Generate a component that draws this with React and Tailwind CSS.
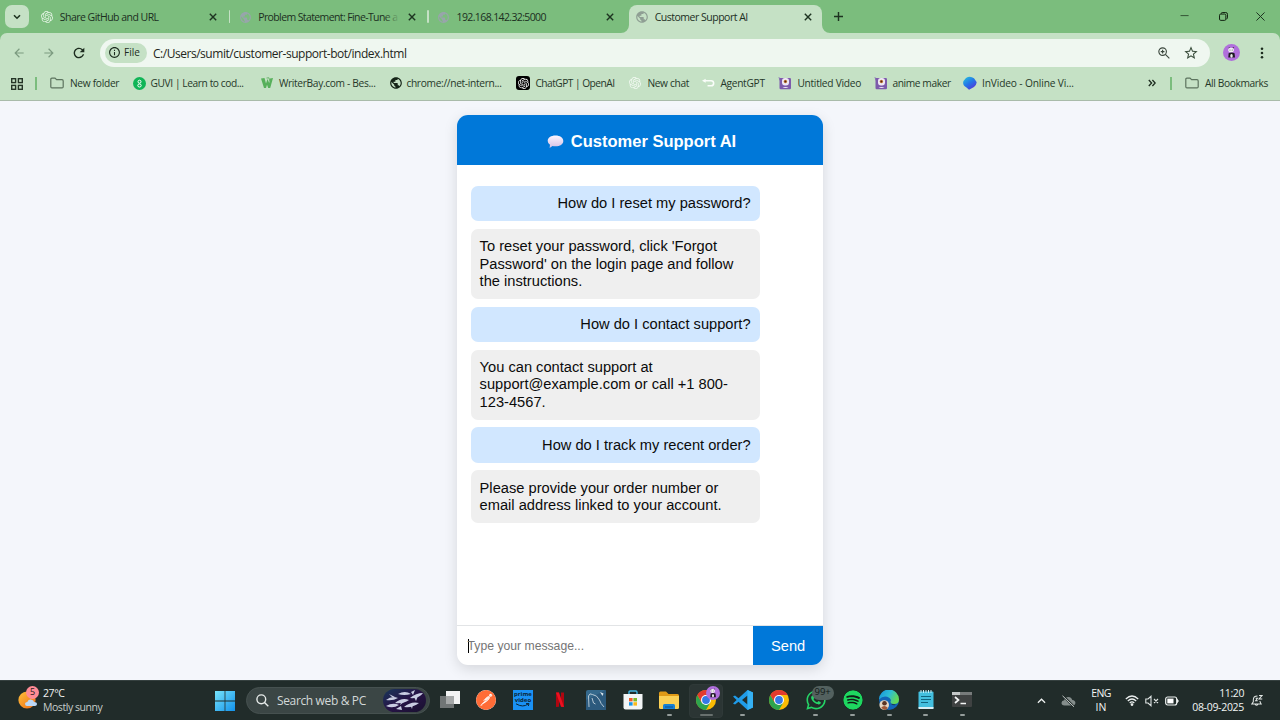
import React from "react";
import { SiOpenai, SiPostman } from "react-icons/si";
import { FaSpotify, FaWhatsapp } from "react-icons/fa";
import { MdPublic, MdStarBorder, MdRefresh, MdArrowBack, MdArrowForward, MdInfoOutline } from "react-icons/md";

const X = () => (
  <svg viewBox="0 0 8 8" className="h-[8px] w-[8px]" stroke="#1d3320" strokeWidth="1.4" fill="none">
    <path d="M0.8 0.8 7.2 7.2M7.2 0.8 0.8 7.2" />
  </svg>
);

const Flare = ({ left }) => (
  <svg viewBox="0 0 8 8" className={left ? "absolute -left-[8px] bottom-0 h-2 w-2" : "absolute -right-[8px] bottom-0 h-2 w-2"} fill="#c5e1c5">
    <path d={left ? "M8 0V8H0A8 8 0 0 0 8 0Z" : "M0 0V8H8A8 8 0 0 1 0 0Z"} />
  </svg>
);

const tabs = [
  { title: "Share GitHub and URL", icon: <SiOpenai className="text-[#e6f5e6]" size={12} />, cls: "tracking-[-0.53px]" },
  { title: "Problem Statement: Fine-Tune a", icon: <MdPublic className="text-[#98a5ab]" size={13} />, cls: "tracking-[-0.61px]", fade: true },
  { title: "192.168.142.32:5000", icon: <MdPublic className="text-[#98a5ab]" size={13} />, cls: "tracking-[-0.62px]" },
  { title: "Customer Support AI", icon: <MdPublic className="text-[#8f9f94]" size={14} />, cls: "tracking-[-0.49px]", active: true },
];

function TabStrip() {
  return (
    <div className="flex h-[33px] bg-[#7bbd7d]">
      <div className="flex w-[32px] pl-[5px] pt-[5px]">
        <div className="flex h-[23px] w-[24px] items-center justify-center rounded-[7px] bg-[#c5e1c5]">
          <svg viewBox="0 0 8 6" className="w-[8px]" stroke="#1d3320" strokeWidth="1.6" fill="none"><path d="M1 1.2 4 4.2 7 1.2" /></svg>
        </div>
      </div>
      {tabs.map((t, i) => (
        <div key={t.title} className="flex w-[198.4px] shrink-0 pt-[5px]">
          <div className={t.active ? "relative ml-[1.5px] flex h-[28px] w-[193px] items-center rounded-t-[8px] bg-[#c5e1c5] pl-[6.5px]" : "flex h-[24px] w-[197px] items-center pl-[8.5px]"}>
            {t.active && <Flare left />}
            {t.active && <Flare />}
            <span className={t.active ? "mb-[4px] flex w-[19.5px] items-center" : "flex w-[19.3px] items-center"}>{t.icon}</span>
            <span className={t.active ? "mb-[4px] w-[149.5px]" : "relative w-[149.5px]"}>
              <span className={"block whitespace-nowrap text-[10.5px] leading-[16px] text-[#1c2f1f] " + t.cls}>{t.title}</span>
              {t.fade && <span className="absolute left-[126px] top-0 h-4 w-[16px] bg-gradient-to-r from-[#7bbd7d]/0 to-[#7bbd7d]" />}
            </span>
            <span className={t.active ? "mb-[4px]" : ""}><X /></span>
          </div>
          {i < 2 && <div className="mt-[5px] h-[13px] w-[1.6px] shrink-0 rounded bg-[#c5e1c5]" />}
        </div>
      ))}
      <div className="flex w-[26px] items-start justify-center pt-[12px]">
        <svg viewBox="0 0 10 10" className="h-[9px] w-[9px]" stroke="#1d3320" strokeWidth="1.6"><path d="M5 0V10M0 5H10" /></svg>
      </div>
      <div className="ml-auto flex items-start gap-[28.5px] pr-[15px] pt-[12px]">
        <svg viewBox="0 0 10 10" className="h-[9px] w-[10px]" stroke="#2c4a2e" strokeWidth="1"><path d="M0 4H9" /></svg>
        <svg viewBox="0 0 10 10" className="h-[9px] w-[9px]" stroke="#10200f" strokeWidth="1.1" fill="none"><rect x="0.6" y="2.3" width="7" height="7" rx="1.3" /><path d="M2.6 2V1.6Q2.6 .6 3.6 .6H7.5Q9.4 .6 9.4 2.5V6.5Q9.4 7.5 8.3 7.6" /></svg>
        <svg viewBox="0 0 10 10" className="h-[9px] w-[9px]" stroke="#1d3320" strokeWidth="1.1"><path d="M.5 .5 9.5 9.5M9.5 .5 .5 9.5" /></svg>
      </div>
    </div>
  );
}

function Avatar({ className }) {
  return (
    <svg viewBox="0 0 16 16" className={className}>
      <circle cx="8" cy="8" r="8" fill="#b06fdc" />
      <circle cx="5.9" cy="3.8" r=".7" fill="#444" /><circle cx="9.8" cy="3.5" r=".7" fill="#444" />
      <ellipse cx="7.6" cy="5.7" rx="2.7" ry="2.2" fill="#f2eef6" />
      <circle cx="6.6" cy="5.7" r=".5" fill="#555" /><circle cx="8.7" cy="5.7" r=".5" fill="#555" />
      <path d="M5.3 8.6Q8 7.4 10.9 8.6L11.3 12.8H5Z" fill="#1d1a22" />
      <ellipse cx="8" cy="11.2" rx="1.2" ry="1.7" fill="#eee" />
    </svg>
  );
}

function Toolbar() {
  return (
    <div className="flex h-[39px] items-center text-[#3a4d3c]">
      <div className="flex w-[100px] shrink-0 items-center pl-[12px]">
        <MdArrowBack size={14} className="text-[#7c9b80]" />
        <MdArrowForward size={14} className="ml-[15.5px] text-[#7c9b80]" />
        <MdRefresh size={16} className="ml-[15px] text-[#1c2b1e]" />
      </div>
      <div className="flex h-[28px] w-[1110px] shrink-0 items-center rounded-full bg-[#eff7f0] pl-[5px] pr-[11.5px]">
        <div className="flex h-[20px] w-[42px] items-center rounded-full bg-[#c5e1c5] pl-[3px] text-[#1c2b1e]">
          <MdInfoOutline size={13} />
          <span className="ml-[3px] text-[10px] font-medium">File</span>
        </div>
        <span className="ml-[6px] mt-[2px] text-[12px] tracking-[-0.47px] text-[#1f2620]">C:/Users/sumit/customer-support-bot/index.html</span>
        <svg viewBox="0 0 13 13" className="ml-auto h-[12px] w-[12px]" fill="none" stroke="#3a463c" strokeWidth="1.2"><circle cx="5" cy="5" r="4.1" /><path d="M8 8 12.3 12.3M5 3V7M3 5H7" /></svg>
        <MdStarBorder size={16} className="ml-[13px]" />
      </div>
      <Avatar className="ml-[13px] h-[17px] w-[17px] shrink-0" />
      <svg viewBox="0 0 4 14" className="ml-[20px] h-[12px] w-[4px] shrink-0" fill="#1c2b1e"><circle cx="2" cy="2" r="1.5" /><circle cx="2" cy="7" r="1.5" /><circle cx="2" cy="12" r="1.5" /></svg>
    </div>
  );
}

const Guvi = () => (
  <svg viewBox="0 0 13 13" className="h-[13px] w-[13px]"><circle cx="6.5" cy="6.5" r="6.5" fill="#10b557" /><circle cx="6.5" cy="4.7" r="1.5" fill="none" stroke="#fff" strokeWidth="1" /><ellipse cx="6.5" cy="8.5" rx="1.7" ry="1.5" fill="none" stroke="#fff" strokeWidth="1" /></svg>
);
const Writer = () => (
  <svg viewBox="0 0 12 12" className="h-[12px] w-[12px]"><path d="M0 1.5 3.5 1 5 6.5 6.5 2 8.2 6 9 1.5 12 1 9.2 11H7.2L6 7.8 5 11H3Z" fill="#57b05b" /><path d="M5.5 1 8 .8 8.8 4" stroke="#6cb56e" fill="none" /></svg>
);
const ChatGpt = () => (
  <span className="flex h-[14px] w-[14px] items-center justify-center rounded-[3px] bg-black"><SiOpenai size={11} className="text-white" /></span>
);
const Agent = () => (
  <svg viewBox="0 0 14 12" className="h-[12px] w-[13px]" fill="none" stroke="#fafdfa" strokeWidth="1.7"><path d="M3 3.5H9.8A2.7 2.7 0 0 1 9.8 9H6" /><path d="M0 3.5 4 1.3V5.7Z" fill="#fafdfa" stroke="none" /></svg>
);
const Robot = () => (
  <svg viewBox="0 0 14 14" className="h-[14px] w-[14px]"><path d="M.3 1 3.5 2.5 2 5Z" fill="#8c78b8" /><rect x="1.5" y="2" width="11.5" height="11.2" rx="1.2" fill="#7d5bab" /><rect x="4" y="2" width="7" height="7.5" rx="3" fill="#efe8f5" /><circle cx="7.4" cy="5.5" r="1.7" fill="#d08a3a" /><circle cx="7.4" cy="5.5" r="1" fill="#5a2015" /><path d="M4.5 12Q7.5 10 10.5 12Z" fill="#eee7f5" /></svg>
);
const InVideo = () => (
  <svg viewBox="0 0 14 14" className="h-[14px] w-[14px]"><defs><linearGradient id="inv" x1="0" y1="0" x2="0.7" y2="1"><stop offset="0" stopColor="#25c8dc" /><stop offset=".55" stopColor="#2474e8" /><stop offset="1" stopColor="#5435d8" /></linearGradient></defs><path d="M3 2Q7-.8 11 2.2L13.6 6Q14 8 11 11L6 13.8 3.5 11.5Q-1 9 .5 5Z" fill="url(#inv)" /></svg>
);
const Folder = () => <svg viewBox="0 0 14 12" className="h-[12px] w-[14px]" fill="none" stroke="#5c735e" strokeWidth="1.2"><path d="M.8 2.2Q.8 1.1 1.9 1.1H5L6.6 2.7H12Q13.2 2.7 13.2 3.9V9.7Q13.2 10.8 12.1 10.8H1.9Q.8 10.8 .8 9.7Z" /></svg>;

const marks = [
  ["New folder", <Folder />, "w-[82.6px]", "w-[20px]", "tracking-[-0.3px]"],
  ["GUVI | Learn to cod...", <Guvi />, "w-[128.3px]", "w-[18px]", "tracking-[-0.41px]"],
  ["WriterBay.com - Bes...", <Writer />, "w-[128px]", "w-[18px]", "tracking-[-0.33px]"],
  ["chrome://net-intern...", <MdPublic size={14} className="text-[#152417]" />, "w-[127.5px]", "w-[17.5px]", "tracking-[-0.32px]"],
  ["ChatGPT | OpenAI", <ChatGpt />, "w-[113px]", "w-[19px]", "tracking-[-0.52px]"],
  ["New chat", <SiOpenai size={12} className="text-[#f3faf3]" />, "w-[73px]", "w-[18px]", "tracking-[-0.33px]"],
  ["AgentGPT", <Agent />, "w-[76px]", "w-[18px]", "tracking-[-0.3px]"],
  ["Untitled Video", <Robot />, "w-[96px]", "w-[19px]", "tracking-[-0.27px]"],
  ["anime maker", <Robot />, "w-[88.7px]", "w-[18px]", "tracking-[-0.38px]"],
  ["InVideo - Online Vi...", <InVideo />, "w-[150px]", "w-[19px]", "tracking-[-0.15px]"],
];

function Bookmarks() {
  return (
    <div className="flex h-[23px] items-center text-[10.2px] text-[#263829]">
      <svg viewBox="0 0 12 12" className="ml-[10.5px] h-[12px] w-[12px] shrink-0" fill="none" stroke="#253527" strokeWidth="1.4"><rect x=".7" y=".7" width="3.9" height="3.9" /><rect x="7.4" y=".7" width="3.9" height="3.9" /><rect x=".7" y="7.4" width="3.9" height="3.9" /><rect x="7.4" y="7.4" width="3.9" height="3.9" /></svg>
      <div className="ml-[12.5px] mr-[13.3px] h-[13px] w-[1.7px] shrink-0 bg-[#7bbd7d]" />
      {marks.map(([t, icon, w, iw, tr]) => (
        <div key={t} className={"flex shrink-0 items-center whitespace-nowrap " + w}>
          <span className={"flex shrink-0 items-center " + iw}>{icon}</span>
          <span className={tr}>{t}</span>
        </div>
      ))}
      <div className="ml-auto flex items-center">
        <svg viewBox="0 0 8 8" className="h-[8px] w-[8px]" fill="none" stroke="#1c2b1e" strokeWidth="1.3"><path d="M.8 1 3.6 4 .8 7M4.4 1 7.2 4 4.4 7" /></svg>
        <div className="ml-[14px] mr-[13px] h-[13px] w-[1.7px] bg-[#7bbd7d]" />
        <Folder />
        <span className="ml-[6px] w-[75px] whitespace-nowrap tracking-[-0.38px]">All Bookmarks</span>
      </div>
    </div>
  );
}

const messages = [
  ["user", "How do I reset my password?"],
  ["bot", "To reset your password, click 'Forgot Password' on the login page and follow the instructions."],
  ["user", "How do I contact support?"],
  ["bot", "You can contact support at support@example.com or call +1 800-123-4567."],
  ["user", "How do I track my recent order?"],
  ["bot", "Please provide your order number or email address linked to your account."],
];

function Chat() {
  return (
    <div className="flex h-[550px] w-[366.8px] flex-col overflow-hidden rounded-[11px] bg-white font-['Liberation_Sans',Arial,sans-serif] shadow-[0_4px_14px_rgba(0,0,0,0.13)]">
      <div className="flex h-[49.7px] items-center justify-center bg-[#0078d9] pl-[3px] pt-[3px] text-[16.5px] font-bold text-white">
        <svg viewBox="0 0 17 14" className="mr-[7px] h-[14px] w-[17px]"><defs><linearGradient id="bub" x1="0" y1="0" x2="0" y2="1"><stop offset="0" stopColor="#fbf5ff" /><stop offset="1" stopColor="#d3bfe4" /></linearGradient></defs><path d="M8.5 .6C13 .6 16.3 2.7 16.3 6S13 11.3 8.5 11.3Q6.8 11.3 5.5 10.9L2.6 13 3 9.8Q.7 8.3 .7 6C.7 2.7 4 .6 8.5 .6Z" fill="url(#bub)" /></svg>
        Customer Support AI
      </div>
      <div className="flex flex-1 flex-col gap-[7.9px] px-[14px] pt-[21.1px]">
        {messages.map(([who, text]) => (
          <div key={text} className={"w-[289px] rounded-[7px] px-[9px] pb-[8.3px] pt-[9.3px] text-[14.67px] leading-[17.42px] text-[#0b0b0b] " + (who === "user" ? "bg-[#d1e7ff] text-right" : "bg-[#efefef]")}>{text}</div>
        ))}
      </div>
      <div className="flex h-[40px] border-t border-[#e2e4e6]">
        <div className="flex flex-1 items-center pl-[11px] text-[12.2px] text-[#757575]">
          <span className="-mr-px h-[14px] w-px bg-black" />
          <span>Type your message...</span>
        </div>
        <div className="flex w-[70.6px] items-center justify-center bg-[#0078d9] text-[14.67px] text-white">Send</div>
      </div>
    </div>
  );
}

const S = ({ children, box = "0 0 20 20", c = "h-[20px] w-[20px]" }) => <svg viewBox={box} className={c}>{children}</svg>;

const Chrome = () => (
  <S>
    <circle cx="10" cy="10" r="10" fill="#fbbc04" />
    <path d="M1.34 5A10 10 0 0 0 10 20L14.33 12.5 10 10 5.67 12.5Z" fill="#2da44e" />
    <path d="M1.34 5A10 10 0 0 1 18.66 5H10L5.67 12.5Z" fill="#e33b2e" />
    <circle cx="10" cy="10" r="5" fill="#fff" /><circle cx="10" cy="10" r="3.9" fill="#3479e6" />
  </S>
);
const Prime = () => (
  <span className="flex h-[20px] w-[20px] flex-col items-center bg-[#1a91f4] pt-[2px] text-[6px] font-bold leading-[5.5px] text-[#0c2536]">
    <span>prime</span><span>video</span>
    <svg viewBox="0 0 14 4" className="h-[4px] w-[14px]" fill="none" stroke="#0c2536"><path d="M0 .8Q7 5 12 1M10 .6H13L12.3 3" /></svg>
  </span>
);
const apps = [
  ["task view", <S><rect x="6" y="1" width="14" height="13" fill="#f2f3f3" /><rect x="0" y="6" width="14" height="12" fill="#707575" /><rect x="6" y="6" width="8" height="8" fill="#a5a8a8" /></S>],
  ["postman", <SiPostman size={20} className="rounded-full bg-white text-[#ff6c37]" />],
  ["prime", <Prime />],
  ["netflix", <S><path d="M6 2.5H9V16.8L6 17Z" fill="#b00610" /><path d="M11 2.5H14V17L11 16.8Z" fill="#b00610" /><path d="M6 2.5H9L14 17 11 16.8Z" fill="#ec1020" /></S>],
  ["mysql", <S><rect width="20" height="20" rx="2" fill="#35698c" /><path d="M0 10 20 0V20H0Z" fill="#2c5a7d" /><path d="M3 17 2.5 6Q3.5 2.5 6.5 4.5 11 5 13.5 10 14.5 13.5 18 17M6 8 7.5 13 9.5 14" fill="none" stroke="#c3d3dd" strokeWidth=".9" /><path d="M14 2 17.5 3.5 16.5 6Z" fill="#dbe6ec" /></S>],
  ["store", <S><path d="M6 5V2.2Q6 1 7.2 1H12.8Q14 1 14 2.2V5" fill="none" stroke="#43b4e0" strokeWidth="1.4" /><path d="M.5 4H19.5V17.5Q19.5 19.5 17.5 19.5H2.5Q.5 19.5 .5 17.5Z" fill="#f3f5f6" /><path d="M6 8H9.6V11.4H6Z" fill="#f15a29" /><path d="M10.4 8H14V11.4H10.4Z" fill="#7ab929" /><path d="M6 12.2H9.6V15.6H6Z" fill="#1996e8" /><path d="M10.4 12.2H14V15.6H10.4Z" fill="#fbb91a" /></S>],
  ["files", <S><path d="M0 3Q0 1.5 1.5 1.5H7L9.5 4H18.5Q20 4 20 5.5V10H0Z" fill="#e09a17" /><path d="M0 6H20V17.5Q20 19 18.5 19H1.5Q0 19 0 17.5Z" fill="#fbd055" /><path d="M4 19V15.5Q4 14 5.5 14H14.5Q16 14 16 15.5V19Z" fill="#1680d5" /><path d="M6 17H14" stroke="#0b4f92" /></S>, "dot"],
  ["chrome-profile", <Chrome />, "active"],
  ["code", <S><path d="M14.5 0 20 2.5V17.5L14.5 20 5.5 11.7 2 14.5 0 13.4 3.6 10 0 6.6 2 5.5 5.5 8.3ZM14.5 5.5 9 10 14.5 14.5Z" fill="#1f9be8" fillRule="evenodd" /><path d="M14.5 0 20 2.5V17.5L14.5 20Z" fill="#35b1f4" /></S>, "dot"],
  ["chrome", <Chrome />],
  ["whatsapp", <FaWhatsapp size={22} className="text-[#25d366]" />, "badge"],
  ["spotify", <FaSpotify size={20} className="rounded-full bg-[#101c16] text-[#1ed760]" />, "dot"],
  ["edge", <S><defs><linearGradient id="edg" x1="0" y1="0" x2="1" y2=".4"><stop offset="0" stopColor="#1691dc" /><stop offset=".55" stopColor="#2dbdd6" /><stop offset="1" stopColor="#63d957" /></linearGradient></defs><circle cx="10" cy="10" r="10" fill="#1265b8" /><path d="M0 9.5A10 10 0 0 1 20 9.5Q20 14 15 14 11 14 11.5 11.5 12.7 9.8 10.5 8 5 4.5 0 9.5Z" fill="url(#edg)" /><path d="M11.5 11.5Q11 14.5 15.5 14.5 16.5 14.5 17.5 14L15.5 15.3Q11.5 15 11.5 11.5Z" fill="#20292a" /><circle cx="5.2" cy="15" r="4.8" fill="#e6d5c2" /><circle cx="5.5" cy="13.3" r="2.3" fill="#5b3526" /><path d="M2 18Q5 14 9 18L6 20Z" fill="#a05737" /></S>, "dot"],
  ["notepad", <S><rect x="2.5" y="1.5" width="15" height="17" rx="1" fill="#43bfdf" /><path d="M2.5 17H17.5V19H2.5Z" fill="#d8eef4" /><path d="M5 0V3M7.5 0V3M10 0V3M12.5 0V3M15 0V3" stroke="#c8edf6" /><path d="M5 6.5H15M5 9.5H15M5 12.5H12" stroke="#116580" strokeWidth="1.2" /></S>, "dot"],
  ["terminal", <S><rect y="2" width="20" height="15" rx="1" fill="#3f4242" /><path d="M0 2H20V5H0Z" fill="#777b7b" /><path d="M0 2H8V5H0Z" fill="#c4c8c8" /><path d="M3 7 6.5 10 3 13M8.5 13.5H14" fill="none" stroke="#f4f6f6" strokeWidth="1.7" /></S>, "dot"],
];

function Taskbar() {
  return (
    <div className="flex h-[40px] items-center border-t border-[#35403f] bg-[#212c2a] text-[10.5px] text-[#f2f5f4]">
      <div className="flex w-[215px] items-center pl-[18px]">
        <div className="relative h-[24px] w-[21px]">
          <svg viewBox="0 0 21 24" className="h-[24px] w-[21px]"><defs><linearGradient id="sun" x1="0" y1="0" x2="1" y2="1"><stop stopColor="#ffc139" /><stop offset="1" stopColor="#ed6a18" /></linearGradient></defs><circle cx="9" cy="11" r="8.6" fill="url(#sun)" /><path d="M9 17Q7 17 7 14.8 7.2 13.1 9.3 12.9 10.5 10.1 13.5 10.7 15.7 11.1 16 13 19 13.1 19 15.3 18.8 17 17 17Z" fill="#bdd8f6" /></svg>
          <span className="absolute left-[8px] top-[-3px] flex h-[13px] w-[13px] items-center justify-center rounded-full bg-[#ff8b95] text-[9px] text-[#2d1b1d]">5</span>
        </div>
        <div className="ml-[4px] leading-[13.5px]">
          <div className="tracking-[-0.4px]">27°C</div><div className="tracking-[-0.45px] text-[#c6cccb]">Mostly sunny</div>
        </div>
      </div>
      <svg viewBox="0 0 20 20" className="h-[20px] w-[20px]"><defs><linearGradient id="win" x1="0" y1="0" x2="1" y2="1"><stop stopColor="#77e4fb" /><stop offset="1" stopColor="#1291ea" /></linearGradient></defs><path d="M0 0H9.6V9.6H0ZM10.4 0H20V9.6H10.4ZM0 10.4H9.6V20H0ZM10.4 10.4H20V20H10.4Z" fill="url(#win)" /></svg>
      <div className="ml-[11px] flex h-[27px] w-[183.5px] items-center rounded-full border border-[#465150] bg-[#3b4645] pl-[9px]">
        <svg viewBox="0 0 13 13" className="h-[13px] w-[13px]" fill="none" stroke="#e8eceb" strokeWidth="1.4"><circle cx="5.3" cy="5.3" r="4.4" /><path d="M8.5 8.5 12.3 12.3" /></svg>
        <span className="ml-[8px] w-[106px] whitespace-nowrap text-[12px] tracking-[-0.36px] text-[#d3d9d8]">Search web &amp; PC</span>
        <svg viewBox="0 0 43 23" className="h-[23px] w-[43px]"><defs><linearGradient id="fish" x1="0" y1="0" x2="1" y2="1"><stop stopColor="#183659" /><stop offset=".5" stopColor="#271447" /><stop offset="1" stopColor="#18102e" /></linearGradient></defs><rect width="43" height="23" rx="11.5" fill="url(#fish)" /><g fill="#c9cde2"><path d="M3 11Q9 6 15 9Q10 12 3 11ZM15 5Q22 1 28 5Q21 7 15 5ZM12 14Q19 8 26 11Q20 15 12 14ZM27 9Q33 4 40 4Q36 10 27 9ZM3 17Q10 13 16 16Q10 20 3 17ZM21 18Q28 12 36 14Q30 19 21 18Z" /><path d="M9 8 6 5 12 8ZM19 11 17 16 21 13ZM31 8 33 12 35 7ZM27 15 29 20 30 15ZM13 20 18 17 19 21ZM28 3 32 1 30 6Z" /></g></svg>
      </div>
      <div className="ml-[1.9px] flex">
        {apps.map(([name, icon, state]) => (
          <div key={name} className="relative flex h-[40px] w-[36.64px] items-center justify-center">
            {state === "active" && <span className="absolute left-[1px] top-[3px] h-[34px] w-[34px] rounded-[4px] border border-[#2f3938] bg-[#2b3534]" />}
            <span className="relative -top-[0.5px] flex">{icon}</span>
            {state === "active" && <Avatar className="absolute left-[18.5px] top-[5px] h-[14px] w-[14px]" />}
            {state === "badge" && <span className="absolute left-[14px] top-[5px] flex h-[14px] w-[22px] items-center justify-center rounded-full bg-[#53615f] text-[9.5px] text-[#111a18]">99+</span>}
            {state && <span className={"absolute bottom-[4.5px] h-[2.5px] rounded-full " + (state === "active" ? "w-[13px] bg-[#68706e]" : "w-[5px] bg-[#959d9b]")} />}
          </div>
        ))}
      </div>
      <div className="ml-auto flex items-center pr-[17px]">
        <svg viewBox="0 0 10 6" className="h-[6px] w-[9px]" fill="none" stroke="#eef1f0" strokeWidth="1.4"><path d="M1 5 5 1 9 5" /></svg>
        <svg viewBox="0 0 15 12" className="ml-[15px] h-[12px] w-[15px]"><path d="M3.5 10.5Q.5 10.5 .5 7.8.7 5.5 3.2 5.2 4.2 2 7.4 2 10.3 2 11.3 4.9 14.4 5.2 14.4 7.8 14.3 10.5 11.5 10.5Z" fill="#848d8b" /><path d="M2 .8 13 11.8" stroke="#212c2a" strokeWidth="2.2" /><path d="M1.5 .8 13 11.8" stroke="#c5cbc9" /></svg>
        <div className="ml-[13px] w-[24px] whitespace-nowrap text-center leading-[13.5px]"><div className="tracking-[-0.6px]">ENG</div><div>IN</div></div>
        <svg viewBox="0 0 14 11" className="ml-[12px] h-[11px] w-[14px]" fill="none" stroke="#edf1f0" strokeWidth="1.2"><path d="M.8 4Q7-2 13.2 4M2.8 6Q7 2 11.2 6M4.7 8Q7 5.8 9.3 8" /><circle cx="7" cy="9.6" r=".8" fill="#edf1f0" /></svg>
        <svg viewBox="0 0 14 12" className="ml-[6px] h-[12px] w-[14px]" fill="none" stroke="#dfe4e3" strokeWidth="1.1"><path d="M.8 4H3L6 1.3V10.7L3 8H.8ZM9 4 13 8M13 4 9 8" /></svg>
        <svg viewBox="0 0 14 10" className="ml-[6px] h-[10px] w-[14px]"><rect x=".7" y="1" width="11" height="8" rx="2" fill="none" stroke="#edf1f0" strokeWidth="1.2" /><rect x="2.3" y="2.6" width="6.2" height="4.8" fill="#fff" /><path d="M12.5 3.5Q14 5 12.5 6.5Z" fill="#edf1f0" stroke="#edf1f0" /></svg>
        <div className="ml-[12px] w-[53px] whitespace-nowrap text-right leading-[13.5px]"><div className="tracking-[-0.4px]">11:20</div><div className="-ml-2 tracking-[-0.3px]">08-09-2025</div></div>
        <svg viewBox="0 0 13 13" className="ml-[7px] h-[13px] w-[12px]" fill="none" stroke="#e3e8e6" strokeWidth="1.1"><path d="M7 1.5Q2.5 1.5 2.5 6V8L1 10.2H11L9.8 8V7M4.5 10.5Q6 13 7.5 10.5M8.7 1H12L8.7 4.8H12.2M5 4H7L5 6.8H7.3" /></svg>
      </div>
    </div>
  );
}

export default function App() {
  return (
    <div className="flex h-[720px] w-[1280px] flex-col overflow-hidden bg-[#f4f6fb] font-['Open_Sans','Noto_Sans',sans-serif]">
      <div className="bg-[#7bbd7d]">
        <TabStrip />
        <div className="h-[68px] rounded-t-[7px] border-b border-[#a9bbaa] bg-[#c5e1c5]">
          <Toolbar />
          <Bookmarks />
        </div>
      </div>
      <main className="flex flex-1 justify-center pt-[14.4px]">
        <Chat />
      </main>
      <Taskbar />
    </div>
  );
}
